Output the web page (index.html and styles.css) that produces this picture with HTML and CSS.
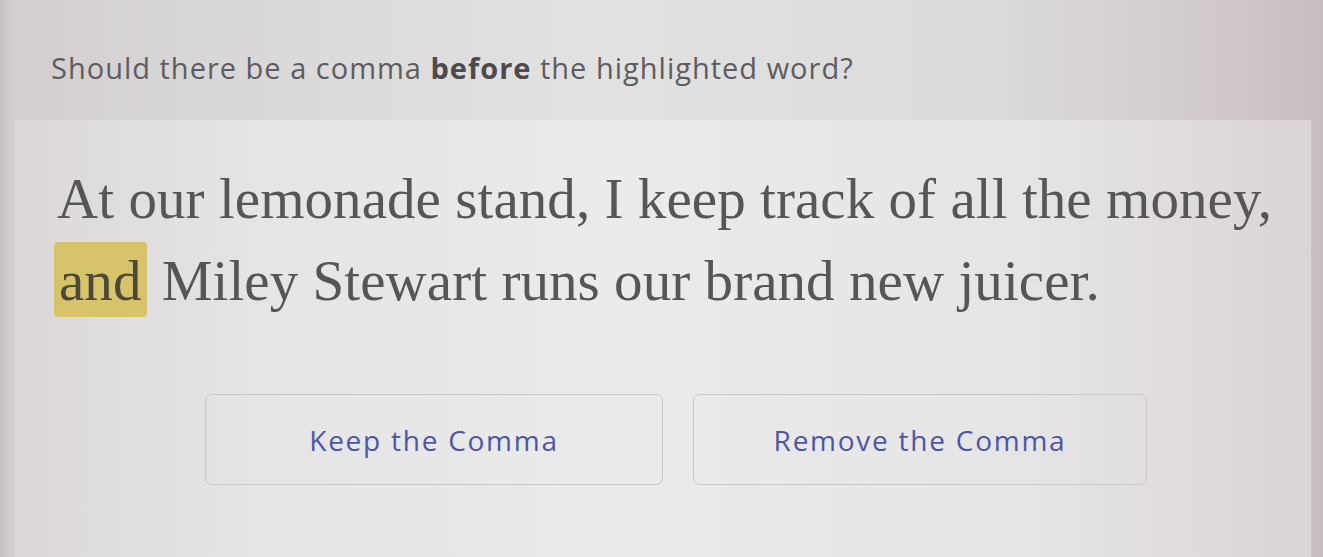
FILE: index.html
```html
<!DOCTYPE html>
<html>
<head>
<meta charset="utf-8">
<link rel="stylesheet" href="styles.css">
</head>
<body>
<div class="screen">
  <div class="header">
    <p class="question">Should there be a comma <b>before</b> the highlighted word?</p>
  </div>
  <div class="card">
    <p class="sentence">At our lemonade stand, I keep track of all the money, <span class="hl">and</span> Miley Stewart runs our brand new juicer.</p>
    <div class="choices">
      <button class="choice keep">Keep the Comma</button>
      <button class="choice remove">Remove the Comma</button>
    </div>
  </div>
</div>
</body>
</html>
```
FILE: styles.css
```css
html, body {
  margin: 0;
  padding: 0;
  width: 1323px;
  height: 557px;
  overflow: hidden;
}
body {
  background: linear-gradient(90deg, #c6c2c1 0px, #d3cfd0 13px, #d9d6d7 200px, #e2e2e2 600px, #dcdadb 1000px, #cfc6c8 1250px, #c6bdbe 1323px);
}
.screen {
  height: 557px;
  display: flex;
  flex-direction: column;
}
.header {
  height: 120px;
  padding-left: 51px;
  padding-top: 14px;
  display: flex;
  align-items: center;
  box-sizing: border-box;
}
.question {
  margin: 0;
  font-family: "Open Sans", "Noto Sans", sans-serif;
  font-size: 29px;
  color: #5e5c5f;
  letter-spacing: 1px;
}
.question b {
  font-weight: 700;
  color: #4c4a4d;
}
.card {
  flex: 1;
  margin-left: 15px;
  margin-right: 12px;
  background: linear-gradient(90deg, #dcd8d9 0px, #e6e4e5 250px, #ebebeb 600px, #e6e5e6 1000px, #dbd4d6 1296px);
  padding: 38px 0 0 42px;
  box-sizing: border-box;
}
.sentence {
  margin: 0;
  font-family: "Liberation Serif", "Times New Roman", serif;
  font-size: 57px;
  line-height: 82px;
  color: #575557;
  width: 1262px;
  letter-spacing: 0.06px;
}
.hl {
  background: #d7c46a;
  border-radius: 4px;
  padding: 7px 6px 5px 5px;
  margin-left: -3px;
  color: #4d4838;
}
.choices {
  display: flex;
  gap: 30px;
  margin-top: 72px;
  padding-left: 148px;
}
.choice {
  width: 458px;
  height: 91px;
  border: 1.5px solid #c9c7c8;
  border-radius: 7px;
  background: transparent;
  font-family: "Open Sans", "Noto Sans", sans-serif;
  font-size: 28px;
  color: #4d56a6;
  letter-spacing: 1.75px;
  padding: 0;
}
.choice.remove {
  width: 454px;
}
```
